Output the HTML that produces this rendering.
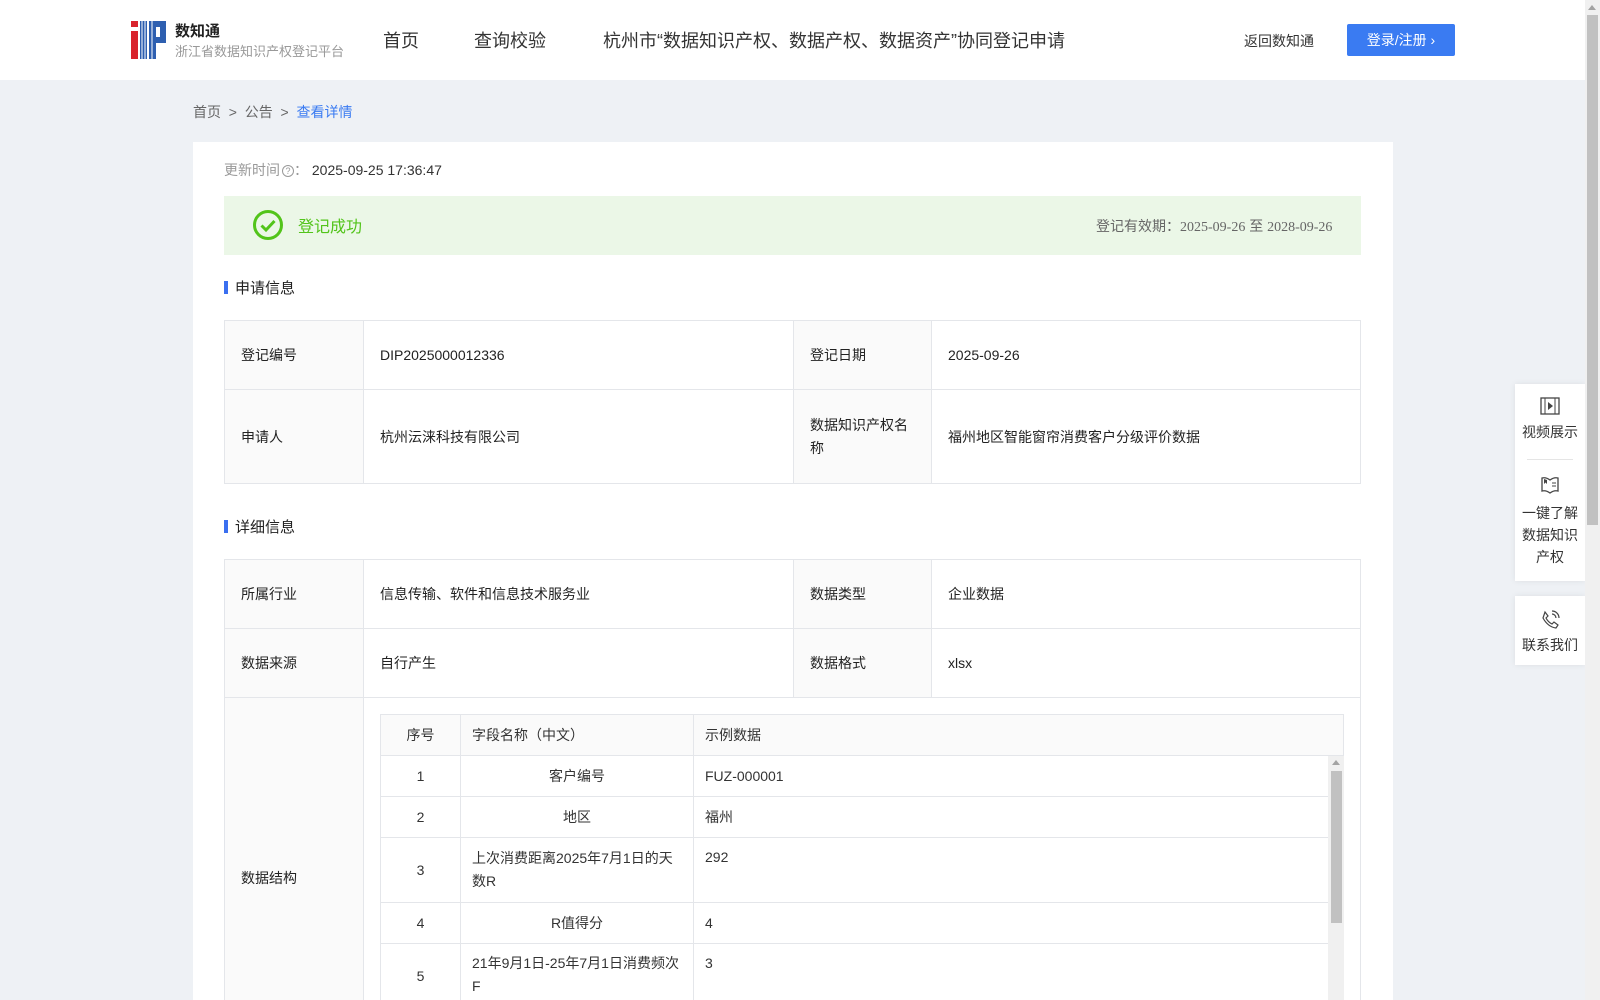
<!DOCTYPE html>
<html><head><meta charset="utf-8"><style>
*{margin:0;padding:0;box-sizing:border-box}
html,body{width:1600px;height:1000px;overflow:hidden}
body{background:#eef1f5;font-family:"Liberation Sans","Noto Sans CJK SC",sans-serif;color:#333;position:relative}
#w{position:absolute;left:0;top:0;width:1600px;height:1000px;overflow:hidden}
.a{position:absolute;white-space:nowrap}
.hdr{position:absolute;left:0;top:0;width:1585px;height:80px;background:#fff}
.card{position:absolute;left:193px;top:142px;width:1200px;height:858px;background:#fff}
table{border-collapse:collapse;position:absolute}
td{border:1px solid #e4e6ea;font-size:14px;color:#222;padding:0 16px;vertical-align:middle}
td.k{background:#fafafa}
.in td{font-size:14px;color:#333;padding:0 11px}
.sb{position:absolute;left:1585px;top:0;width:15px;height:1000px;background:#f0f0f0}
.fp{position:absolute;background:#fff;width:70px;box-shadow:0 0 6px rgba(0,0,0,.08);text-align:center;font-size:14px;color:#333}
</style></head><body><div id="w">
<div class="hdr">
 <svg class="a" style="left:131px;top:21px" width="35" height="38" viewBox="0 0 35 38">
  <rect x="0" y="0" width="7" height="6" fill="#d9232c"/>
  <rect x="0" y="10" width="7" height="28" fill="#d9232c"/>
  <rect x="9" y="0" width="7" height="38" fill="#2e5fb0"/>
  <rect x="18" y="0" width="17" height="22" fill="#2e5fb0"/>
  <rect x="18" y="22" width="7" height="16" fill="#2e5fb0"/>
  <rect x="25" y="6" width="4" height="10" fill="#fff"/>
  <line x1="11" y1="0" x2="11" y2="38" stroke="#fff" stroke-width="1"/>
  <line x1="14" y1="0" x2="14" y2="38" stroke="#fff" stroke-width="1"/>
  <line x1="21" y1="0" x2="21" y2="38" stroke="#fff" stroke-width="1"/>
 </svg>
 <div class="a" style="left:175px;top:20px;font-size:15px;color:#222;font-weight:bold">数知通</div>
 <div class="a" style="left:175px;top:41px;font-size:13px;color:#999">浙江省数据知识产权登记平台</div>
 <div class="a" style="left:383px;top:27px;font-size:18px;color:#333">首页</div>
 <div class="a" style="left:474px;top:27px;font-size:18px;color:#333">查询校验</div>
 <div class="a" style="left:603px;top:27px;font-size:18px;color:#333">杭州市“数据知识产权、数据产权、数据资产”协同登记申请</div>
 <div class="a" style="left:1244px;top:31px;font-size:14px;color:#333">返回数知通</div>
 <div class="a" style="left:1347px;top:24px;width:108px;height:32px;background:#3a7bf2;border-radius:2px;color:#fff;font-size:14px;line-height:32px;text-align:center">登录/注册 ›</div>
</div>
<div class="a" style="left:193px;top:102px;font-size:14px;color:#666">首页 &nbsp;&gt;&nbsp; 公告 &nbsp;&gt;&nbsp; <span style="color:#3a7bf2">查看详情</span></div>
<div class="card"></div>
<div class="a" style="left:224px;top:160px;font-size:14px;color:#999">更新时间<span style="display:inline-block;width:12px;height:12px;border:1px solid #999;border-radius:50%;font-size:9px;line-height:10px;text-align:center;vertical-align:1px;margin-left:2px">?</span>： <span style="color:#333">2025-09-25 17:36:47</span></div>
<div class="a" style="left:224px;top:196px;width:1137px;height:59px;background:#ebf7e7"></div>
<svg class="a" style="left:252px;top:209px" width="32" height="32" viewBox="0 0 32 32"><circle cx="16" cy="16" r="13.5" fill="none" stroke="#52c41a" stroke-width="3"/><path d="M9.5 16.5l4.5 4.5 8.5-9" fill="none" stroke="#52c41a" stroke-width="3"/></svg>
<div class="a" style="left:298px;top:213px;font-size:16px;color:#52c41a">登记成功</div>
<div class="a" style="left:1096px;top:216px;font-size:14px;color:#666">登记有效期：<span style="font-family:'Liberation Serif',serif">2025-09-26</span> 至 <span style="font-family:'Liberation Serif',serif">2028-09-26</span></div>
<div class="a" style="left:224px;top:281px;width:4px;height:13px;background:#3a6ff0"></div>
<div class="a" style="left:235px;top:277px;font-size:15px;color:#222">申请信息</div>
<table style="left:224px;top:320px;width:1137px">
<tr style="height:69px"><td class="k" style="width:139px">登记编号</td><td style="width:430px">DIP2025000012336</td><td class="k" style="width:138px">登记日期</td><td>2025-09-26</td></tr>
<tr style="height:94px"><td class="k">申请人</td><td>杭州沄涞科技有限公司</td><td class="k" style="white-space:normal;line-height:23px">数据知识产权名称</td><td>福州地区智能窗帘消费客户分级评价数据</td></tr>
</table>
<div class="a" style="left:224px;top:520px;width:4px;height:13px;background:#3a6ff0"></div>
<div class="a" style="left:235px;top:516px;font-size:15px;color:#222">详细信息</div>
<table style="left:224px;top:559px;width:1137px">
<tr style="height:69px"><td class="k" style="width:139px">所属行业</td><td style="width:430px">信息传输、软件和信息技术服务业</td><td class="k" style="width:138px">数据类型</td><td>企业数据</td></tr>
<tr style="height:69px"><td class="k">数据来源</td><td>自行产生</td><td class="k">数据格式</td><td>xlsx</td></tr>
<tr style="height:303px"><td class="k" style="padding-top:58px">数据结构</td><td colspan="3"></td></tr>
</table>
<table class="in" style="left:380px;top:714px;width:964px">
<tr style="height:41px;background:#fafafa"><td style="width:80px;text-align:center">序号</td><td style="width:233px">字段名称（中文）</td><td>示例数据</td></tr>
<tr style="height:41px"><td style="text-align:center">1</td><td style="text-align:center">客户编号</td><td>FUZ-000001</td></tr>
<tr style="height:41px"><td style="text-align:center">2</td><td style="text-align:center">地区</td><td>福州</td></tr>
<tr style="height:65px"><td style="text-align:center">3</td><td style="white-space:normal;line-height:23px">上次消费距离2025年7月1日的天数R</td><td style="vertical-align:top;padding-top:11px">292</td></tr>
<tr style="height:41px"><td style="text-align:center">4</td><td style="text-align:center">R值得分</td><td>4</td></tr>
<tr style="height:57px"><td style="text-align:center;padding-top:8px">5</td><td style="white-space:normal;line-height:23px;vertical-align:top;padding-top:8px">21年9月1日-25年7月1日消费频次F</td><td style="vertical-align:top;padding-top:11px">3</td></tr>
</table>
<div class="a" style="left:1328px;top:756px;width:16px;height:244px;background:#f0f0f0"></div>
<div class="a" style="left:1331px;top:771px;width:11px;height:152px;background:#c1c1c1"></div>
<div class="a" style="left:1332px;top:760px;width:0;height:0;border-left:4px solid transparent;border-right:4px solid transparent;border-bottom:5px solid #a3a3a3"></div>
<div class="fp" style="left:1515px;top:384px;height:197px">
 <svg style="margin-top:13px" width="20" height="18" viewBox="0 0 20 18"><rect x="1" y="1" width="18" height="16" fill="none" stroke="#444" stroke-width="1.3"/><line x1="5" y1="1" x2="5" y2="17" stroke="#444"/><line x1="15" y1="1" x2="15" y2="17" stroke="#444"/><path d="M8 5l5 4-5 4z" fill="#444"/></svg>
 <div style="margin-top:4px">视频展示</div>
 <div style="width:46px;height:1px;background:#e5e5e5;margin:17px auto 15px"></div>
 <svg width="20" height="20" viewBox="0 0 20 20"><path d="M2 3q4-1 8 2q4-3 8-2v13q-4-1-8 2q-4-3-8-2z" fill="none" stroke="#444" stroke-width="1.3"/><path d="M4 4v5l1.5-1.5L7 9V5" fill="#444"/><path d="M12 8h4M12 11h4" stroke="#444"/></svg>
 <div style="line-height:22px;margin-top:4px">一键了解<br>数据知识<br>产权</div>
</div>
<div class="fp" style="left:1515px;top:596px;height:69px">
 <svg style="margin-top:14px" width="20" height="20" viewBox="0 0 20 20"><path d="M5 2l3 4-2 2q2 4 6 6l2-2 4 3-2 3q-8-1-13-10z" fill="none" stroke="#444" stroke-width="1.2"/><path d="M12 4a4 4 0 0 1 4 4M12 1a7 7 0 0 1 7 7" fill="none" stroke="#444" stroke-width="1.2"/></svg>
 <div style="margin-top:2px">联系我们</div>
</div>
<div class="sb"><div style="position:absolute;left:2px;top:15px;width:11px;height:510px;background:#c1c1c1"></div><div style="position:absolute;left:3px;top:5px;border-left:4px solid transparent;border-right:4px solid transparent;border-bottom:5px solid #a3a3a3"></div></div>
</div></body></html>
